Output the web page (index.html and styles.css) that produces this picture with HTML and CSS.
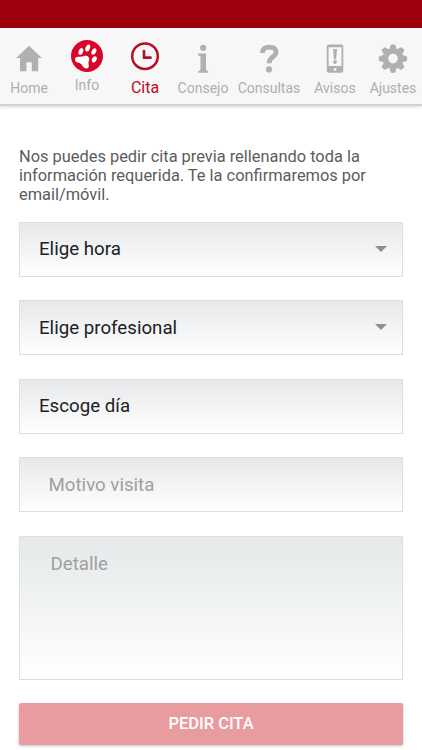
FILE: index.html
```html
<!DOCTYPE html>
<html lang="es">
<head>
<meta charset="utf-8">
<title>Pedir cita</title>
<link rel="stylesheet" href="styles.css">
</head>
<body>
<div class="status"></div>
<nav class="tabs">
  <a class="tab"><svg class="icon" viewBox="0 0 32 32"><path fill="#b0b0b0" d="M16 5.8 28.8 18H25.2V31.2H18.8V22.3H13.4V31.2H7V18H3.2Z"/></svg><span>Home</span></a>
  <a class="tab info"><svg class="icon" viewBox="0 0 32 32"><circle cx="16" cy="16" r="16" fill="#d90429"/><g fill="#fff"><ellipse cx="9.9" cy="11.4" rx="2.2" ry="3.5" transform="rotate(22 9.9 11.4)"/><ellipse cx="16.8" cy="8" rx="2.2" ry="3.7" transform="rotate(20 16.8 8)"/><ellipse cx="22.9" cy="11.5" rx="2.1" ry="3.5" transform="rotate(28 22.9 11.5)"/><ellipse cx="23.3" cy="19.4" rx="2.2" ry="3.3" transform="rotate(28 23.3 19.4)"/><path d="M5.2 17.3C7.5 16.2 10 17.2 12.4 16.3C16.4 14.7 19.6 17.8 17.8 21.2C16.6 23.2 19 25.5 17.2 27.8C15.3 30 12.2 27.2 10.8 24.7C9.3 22.3 5.5 23.3 4.2 20.5C3.6 19.1 4.1 18 5.2 17.3Z"/></g></svg><span>Info</span></a>
  <a class="tab active"><svg class="icon" viewBox="0 0 32 32"><g fill="none" stroke="#b80c23"><circle cx="16" cy="16.2" r="12.8" stroke-width="2.5"/><path stroke-width="2.7" stroke-linecap="round" stroke-linejoin="round" d="M15 11V17.7H21.5"/></g></svg><span>Cita</span></a>
  <a class="tab"><svg class="icon" viewBox="0 0 32 32"><path fill="#b0b0b0" d="M11.2 13.6H19V29C19 30.4 19.8 30.8 21.3 30.9V32.8H11.1V30.9C12.8 30.8 13.5 30.4 13.5 29V17.3C13.5 16 12.6 15.6 11.2 15.5Z"/><circle cx="16.2" cy="7.8" r="3.1" fill="#b0b0b0"/></svg><span>Consejo</span></a>
  <a class="tab"><svg class="icon" viewBox="0 0 32 32"><path fill="none" stroke="#b0b0b0" stroke-width="4.8" d="M9.5 13C9.5 8.6 12.1 7.2 16.2 7.2C20.7 7.2 23 9 23 12.2C23 16.8 16.3 16.8 16.1 23.2"/><circle cx="16" cy="29.4" r="3.1" fill="#b0b0b0"/></svg><span>Consultas</span></a>
  <a class="tab"><svg class="icon" viewBox="0 0 32 32"><g transform="translate(0 2)"><path fill="#b0b0b0" fill-rule="evenodd" d="M9.8 2.5H22.3Q24.3 2.5 24.3 4.5V28.7Q24.3 30.7 22.3 30.7H9.8Q7.8 30.7 7.8 28.7V4.5Q7.8 2.5 9.8 2.5ZM9.6 5.2V24H22.5V5.2ZM14.1 7H18L17.2 17.2H14.9Z"/><circle cx="16" cy="20" r="1.9" fill="#b0b0b0"/><circle cx="16" cy="27.4" r="1.4" fill="#f7f7f7"/></g></svg><span>Avisos</span></a>
  <a class="tab"><svg class="icon" viewBox="0 0 32 32"><g fill="#b0b0b0" transform="translate(16 18.6)"><path id="tooth" d="M-4.1 -8-2.3-13.6Q-2-14.1-1.4-14.1H1.4Q2-14.1 2.3-13.6L4.1-8Z"/><use href="#tooth" transform="rotate(45)"/><use href="#tooth" transform="rotate(90)"/><use href="#tooth" transform="rotate(135)"/><use href="#tooth" transform="rotate(180)"/><use href="#tooth" transform="rotate(225)"/><use href="#tooth" transform="rotate(270)"/><use href="#tooth" transform="rotate(315)"/><circle r="10.2"/><circle r="4.8" fill="#f7f7f7"/></g></svg><span>Ajustes</span></a>
</nav>
<main class="form">
  <p class="intro">Nos puedes pedir cita previa rellenando toda la<br>información requerida. Te la confirmaremos por<br>email/móvil.</p>
  <div class="field"><span>Elige hora</span><svg class="caret" viewBox="0 0 12 6"><path fill="#8e8e90" d="M0 0H12L6 6Z"/></svg></div>
  <div class="field"><span>Elige profesional</span><svg class="caret" viewBox="0 0 12 6"><path fill="#8e8e90" d="M0 0H12L6 6Z"/></svg></div>
  <div class="field"><span>Escoge día</span></div>
  <div class="field reason"><span>Motivo visita</span></div>
  <div class="field detail"><span>Detalle</span></div>
  <button class="submit">PEDIR CITA</button>
</main>
</body>
</html>
```

FILE: styles.css
```css
* { box-sizing: border-box; }
body {
  margin: 0;
  height: 750px;
  overflow: hidden;
  background: #fff;
  font-family: Roboto, "Liberation Sans", sans-serif;
}
.status { height: 28px; background: #9e000e; }
.tabs {
  display: grid;
  grid-template-columns: 58px 58px 58px 58px 74px 58px 58px;
  height: 78px;
  padding-top: 12px;
  background: #f7f7f7;
  border-bottom: 2px solid #d2d2d2;
  box-shadow: 0 1px 3px rgba(0, 0, 0, .15);
}
.tab {
  display: flex;
  flex-direction: column;
  align-items: center;
  color: #aeaeae;
  font-size: 14px;
  line-height: 18px;
  white-space: nowrap;
}
.icon { width: 32px; height: 32px; margin-bottom: 7px; flex: none; overflow: visible; }
.info .icon { margin-top: .4px; margin-bottom: 4px; }
.active { color: #b80c23; font-size: 16px; }
.form { padding: 40px 19px 0; }
.intro {
  margin: 0 0 17.5px;
  padding-top: .5px;
  color: #5c5c5c;
  font-size: 16.4px;
  line-height: 19.2px;
  white-space: nowrap;
}
.field {
  display: flex;
  align-items: center;
  justify-content: space-between;
  height: 55px;
  margin-bottom: 23.5px;
  padding: 0 15px 0 19px;
  border: 1px solid #dcdedf;
  background: linear-gradient(#e6e8ea, #fff);
  color: #202124;
  font-size: 18.7px;
  line-height: 22px;
}
.caret { width: 12px; height: 6px; margin-bottom: 1px; }
.reason { padding-left: 28.5px; color: #a0a0a0; }
.detail {
  height: 144px;
  margin-bottom: 23px;
  padding: 16px 30.5px;
  align-items: flex-start;
  color: #a0a0a0;
  background: linear-gradient(#e5e9ea, #fff);
}
.submit {
  display: block;
  width: 100%;
  height: 42px;
  padding: 0;
  border: 0;
  border-radius: 2px;
  background: #e89ca0;
  box-shadow: 0 1px 3px rgba(0, 0, 0, .25);
  color: #fff;
  font: 500 16.5px/42px Roboto, "Liberation Sans", sans-serif;
}
```
